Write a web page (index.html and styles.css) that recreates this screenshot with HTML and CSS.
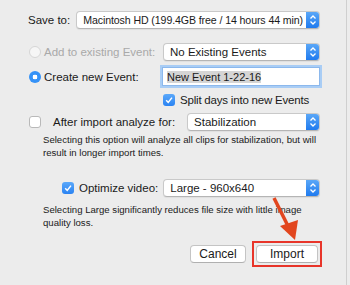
FILE: index.html
```html
<!DOCTYPE html>
<html lang="en">
<head>
    <meta charset="UTF-8">
    <title>Import</title>
    <link rel="stylesheet" href="styles.css">
</head>
<body>
    <div class="dialog">
        <div class="row save-row">
            <span class="label">Save to:</span>
            <div class="popup grow">
                <span class="tight">Macintosh HD (199.4GB free / 14 hours 44 min)</span>
                <span class="stepper"><svg width="8" height="12" viewBox="0 0 8 12"><path d="M1.5 4.5 4 2 6.5 4.5M1.5 7.5 4 10 6.5 7.5" fill="none" stroke="#fff" stroke-width="1.3"/></svg></span>
            </div>
        </div>

        <div class="row add-row">
            <span class="radio off"></span>
            <span class="label muted">Add to existing Event:</span>
            <div class="popup w157">
                <span>No Existing Events</span>
                <span class="stepper"><svg width="8" height="12" viewBox="0 0 8 12"><path d="M1.5 4.5 4 2 6.5 4.5M1.5 7.5 4 10 6.5 7.5" fill="none" stroke="#fff" stroke-width="1.3"/></svg></span>
            </div>
        </div>

        <div class="row create-row">
            <span class="radio on"></span>
            <span class="label">Create new Event:</span>
            <div class="field"><span class="selected">New Event 1-22-16</span></div>
        </div>

        <div class="row split-row">
            <span class="check on"><svg width="10" height="10" viewBox="0 0 10 10"><path d="M2.2 5.2 4.2 7.4 8 2.6" fill="none" stroke="#fff" stroke-width="1.5"/></svg></span>
            <span class="label">Split days into new Events</span>
        </div>

        <div class="row after-row">
            <span class="check off"></span>
            <span class="label">After import analyze for:</span>
            <div class="popup w143">
                <span>Stabilization</span>
                <span class="stepper"><svg width="8" height="12" viewBox="0 0 8 12"><path d="M1.5 4.5 4 2 6.5 4.5M1.5 7.5 4 10 6.5 7.5" fill="none" stroke="#fff" stroke-width="1.3"/></svg></span>
            </div>
        </div>
        <p class="note note-stab">Selecting this option will analyze all clips for stabilization, but will<br>result in longer import times.</p>

        <div class="row optimize-row">
            <span class="check on"><svg width="10" height="10" viewBox="0 0 10 10"><path d="M2.2 5.2 4.2 7.4 8 2.6" fill="none" stroke="#fff" stroke-width="1.5"/></svg></span>
            <span class="label">Optimize video:</span>
            <div class="popup w157">
                <span>Large - 960x640</span>
                <span class="stepper"><svg width="8" height="12" viewBox="0 0 8 12"><path d="M1.5 4.5 4 2 6.5 4.5M1.5 7.5 4 10 6.5 7.5" fill="none" stroke="#fff" stroke-width="1.3"/></svg></span>
            </div>
        </div>
        <p class="note note-opt">Selecting Large significantly reduces file size with little image<br>quality loss.</p>

        <div class="buttons">
            <button class="btn cancel">Cancel</button>
            <div class="highlight"><button class="btn import">Import</button></div>
        </div>

        <!-- annotation arrow -->
        <svg class="arrow" width="40" height="50" viewBox="0 0 40 50">
            <line x1="3" y1="2" x2="18" y2="32" stroke="#e2461e" stroke-width="3.5"/>
            <polygon points="9,30 27,24 24,44" fill="#e2461e"/>
        </svg>
    </div>
</body>
</html>
```

FILE: styles.css
```css
* {
    margin: 0;
    padding: 0;
    box-sizing: border-box;
}

body {
    background: #ececec;
    font-family: "Liberation Sans", Arial, sans-serif;
    font-size: 11.5px;
    color: #1a1a1a;
    overflow: hidden;
}

.dialog {
    position: relative;
    width: 347px;
    height: 285px;
    padding-top: 11px;
    padding-right: 26px;
    border-right: 1px solid #cfcfcf;
}

.row {
    display: flex;
    align-items: center;
}

.label {
    white-space: nowrap;
}

.muted {
    color: #a9a9a9;
}

.save-row {
    height: 18px;
    padding-left: 28px;
    gap: 6px;
}

.add-row {
    height: 18px;
    margin-top: 14px;
    padding-left: 29px;
    gap: 3px;
}

.create-row {
    height: 19px;
    margin-top: 6px;
    padding-left: 29px;
    gap: 3px;
}

.split-row {
    height: 13px;
    margin-top: 7px;
    padding-left: 163px;
    gap: 5px;
    letter-spacing: -0.2px;
}

.after-row {
    height: 18px;
    margin-top: 7px;
    padding-left: 29px;
    gap: 12px;
}

.optimize-row {
    height: 18px;
    margin-top: 20px;
    padding-left: 62px;
    gap: 5px;
}

.popup {
    display: flex;
    align-items: center;
    justify-content: space-between;
    height: 18px;
    padding-left: 6px;
    margin-left: auto;
    background: #fff;
    border: 1px solid #c9c9c9;
    border-bottom-color: #b5b5b5;
    border-radius: 4px;
    box-shadow: 0 1px 1px rgba(0, 0, 0, 0.06);
    white-space: nowrap;
    overflow: hidden;
}

.tight {
    font-size: 10.6px;
    letter-spacing: -0.1px;
}

.grow {
    flex: 1;
}

.w157 {
    width: 157px;
}

.w143 {
    width: 143px;
}

.stepper {
    display: flex;
    align-items: center;
    justify-content: center;
    flex: none;
    width: 14px;
    height: 18px;
    margin-right: -1px;
    background: linear-gradient(#5eaaf8, #1c78ee);
    border-radius: 0 4px 4px 0;
}

.field {
    display: flex;
    align-items: center;
    width: 158px;
    height: 19px;
    margin-left: auto;
    padding-left: 4px;
    background: #fff;
    border: 1px solid #8cb8ec;
    box-shadow: 0 0 0 2px #a9cdf5;
    font-size: 11px;
}

.selected {
    background: #d5d5d5;
}

.radio {
    width: 12px;
    height: 12px;
    border-radius: 50%;
    flex: none;
}

.radio.off {
    background: #f6f6f6;
    border: 1px solid #d6d6d6;
}

.radio.on {
    background: radial-gradient(circle, #fff 0 2.3px, #3592f7 2.6px);
}

.check {
    display: flex;
    align-items: center;
    justify-content: center;
    width: 12px;
    height: 12px;
    border-radius: 3px;
    flex: none;
}

.check.on {
    background: linear-gradient(#5aa8fa, #2a83f2);
}

.check.off {
    background: #fff;
    border: 1px solid #b9b9b9;
}

.note {
    padding-left: 43px;
    font-size: 9.6px;
    line-height: 13px;
    white-space: nowrap;
}

.note-stab {
    margin-top: 2px;
}

.note-opt {
    margin-top: 6px;
}

.buttons {
    display: flex;
    justify-content: flex-end;
    align-items: center;
    gap: 6px;
    height: 26px;
    margin-top: 12px;
}

.btn {
    height: 18px;
    background: #fff;
    border: 1px solid #c4c4c4;
    border-bottom-color: #b0b0b0;
    border-radius: 4px;
    font-family: inherit;
    font-size: 12px;
    color: #1a1a1a;
}

.cancel {
    width: 56px;
}

.highlight {
    padding: 2px;
    margin-right: -2px;
    border: 2px solid #e8352a;
}

.import {
    display: block;
    width: 62px;
}

.arrow {
    position: absolute;
    left: 271px;
    top: 196px;
}
```
